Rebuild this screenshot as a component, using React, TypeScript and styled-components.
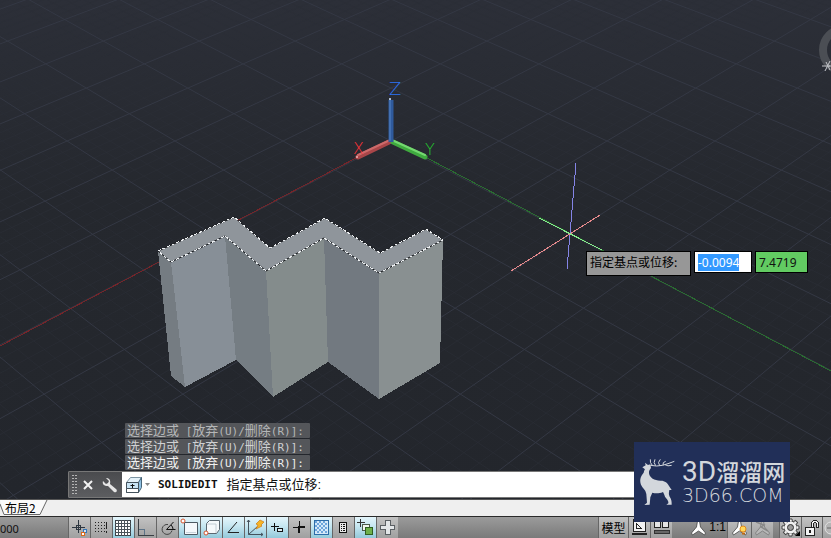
import React, { useEffect, useRef } from 'react';
import styled, { createGlobalStyle } from 'styled-components';

const GlobalStyle = createGlobalStyle`
  * { box-sizing: border-box; }
  body { margin: 0; background: #24272d; font-family: "Noto Sans", "Noto Sans CJK SC", sans-serif; }
  button, input { font: inherit; margin: 0; }
  svg { flex: none; }
`;

const Page = styled.div`
  position: relative;
  display: flex;
  flex-direction: column;
  height: 100vh;
  overflow: hidden;
`;

const Viewport = styled.main`
  position: relative;
  flex: 1;
  min-height: 0;
  overflow: hidden;
  background: linear-gradient(#2c2f38, #25282e 40%, #23262c);
`;

const Scene = styled.svg`
  display: block;
  width: 100%;
  height: 100%;
`;

/* ---------- dynamic input ---------- */

const DynamicInput = styled.div`
  position: absolute;
  left: 586px;
  top: 251px;
  display: flex;
  align-items: flex-start;
  gap: 3px;
  font-size: 12px;
`;

const Prompt = styled.label`
  width: 105px;
  height: 25px;
  padding-left: 3px;
  line-height: 20px;
  border: 1px solid #000;
  background: #979797;
  color: #000;
  white-space: nowrap;
  font-family: "Noto Sans CJK SC", sans-serif;
`;

const Coordinate = styled.input<{ $locked?: boolean }>`
  width: ${(p) => (p.$locked ? 53 : 58)}px;
  height: 22px;
  padding: 0 3px;
  line-height: 20px;
  border: 1px solid #000;
  border-radius: 0;
  outline: none;
  background: ${(p) => (p.$locked ? '#62cb62' : '#fff')};
  color: #111;
  &::selection { background: #3399ff; color: #fff; }
`;

/* ---------- command line ---------- */

const CommandDock = styled.section`
  position: absolute;
  left: 68px;
  right: 100px;
  bottom: 1px;
`;

const History = styled.ol`
  list-style: none;
  margin: 0 0 1px 57px;
  padding: 0;
  display: flex;
  flex-direction: column;
  align-items: flex-start;
  gap: 1px;
`;

const HistoryLine = styled.li<{ $tone: string }>`
  height: 15px;
  padding: 0 2px;
  width: 185px;
  border-radius: 1px;
  background: #54565a;
  color: ${(p) => p.$tone};
  font: 13px/15px "Liberation Sans", "Noto Sans CJK SC", sans-serif;
  white-space: pre;
`;

const Mono = styled.span`
  font-family: "DejaVu Sans Mono", monospace;
  font-size: 11px;
`;

const CommandBar = styled.div`
  display: flex;
  height: 27px;
  border: 1px solid #777;
  border-right: 0;
  border-radius: 2px 0 0 2px;
  background: #fff;
`;

const CommandTools = styled.div`
  display: flex;
  align-items: center;
  width: 53px;
  background: linear-gradient(#4a4b4e, #5c5d60);
`;

const BarButton = styled.button<{ $w: number }>`
  display: flex;
  align-items: center;
  justify-content: center;
  width: ${(p) => p.$w}px;
  height: 100%;
  padding: 0;
  border: 0;
  background: none;
`;

const CommandText = styled.p`
  display: flex;
  align-items: center;
  gap: 9px;
  margin: 0 0 0 4px;
  color: #111;
  font: 13px/24px "Liberation Sans", "Noto Sans CJK SC", sans-serif;
  white-space: nowrap;
`;

const CommandName = styled.strong`
  font: bold 11px/24px "DejaVu Sans Mono", monospace;
`;

/* ---------- layout tabs ---------- */

const TabStrip = styled.nav`
  display: flex;
  height: 17px;
  border-top: 1px solid #555;
  background: #efefef;
`;

const TabButton = styled.button`
  position: relative;
  width: 48px;
  height: 15px;
  padding: 0 0 0 5px;
  border: 0;
  background: none;
  text-align: left;
  color: #000;
  font: 12px/15px "Noto Sans CJK SC", sans-serif;
`;

const TabOutline = styled.svg`
  position: absolute;
  left: 0;
  top: 0;
`;

const TabLabel = styled.span`
  position: relative;
`;

/* ---------- status bar ---------- */

const StatusBar = styled.footer`
  display: flex;
  height: 22px;
  border-top: 1px solid #2a2a2a;
  background: linear-gradient(#9b9b9b, #7a7a7a);
`;

const Readout = styled.output`
  width: 68px;
  overflow: hidden;
  color: #111;
  font-size: 11px;
  line-height: 24px;
`;

const Group = styled.div`
  display: flex;
`;

const Spacer = styled.div`
  flex: 1;
`;

const StatusButton = styled.button<{ $on?: boolean; $w?: number; $plain?: boolean }>`
  display: flex;
  align-items: center;
  justify-content: ${(p) => (p.$plain ? 'flex-end' : 'center')};
  flex: none;
  width: ${(p) => p.$w ?? 22}px;
  height: 21px;
  padding: 0;
  border: 0;
  border-left: 1px solid ${(p) => (p.$plain ? 'transparent' : '#666')};
  overflow: hidden;
  color: #000;
  font: 12px/21px "Noto Sans CJK SC", sans-serif;
  background: ${(p) =>
    p.$on
      ? 'linear-gradient(#e4f5fb, #c5e6f0 45%, #93c9da)'
      : p.$plain
        ? 'none'
        : 'linear-gradient(#c2c2c2, #a0a0a0)'};
`;

const Scale = styled.span`
  padding-right: 1px;
  font: 12px/21px "Liberation Sans", sans-serif;
`;

/* ---------- brand card ---------- */

const Brand = styled.aside`
  position: absolute;
  right: 41px;
  bottom: 16px;
  display: flex;
  align-items: center;
  gap: 7px;
  width: 156px;
  height: 80px;
  padding-left: 5px;
  background: #212f58;
  color: #d3d7dc;
`;

const BrandText = styled.div`
  display: flex;
  flex-direction: column;
  white-space: nowrap;
`;

const BrandTitle = styled.div`
  height: 26px;
  font: 500 23px/26px Roboto, "Noto Sans CJK SC", sans-serif;
`;

const BrandLatin = styled.span`
  font-size: 28px;
  font-weight: 400;
`;

const BrandSite = styled.div`
  font: 200 19px/20px "DejaVu Sans", sans-serif;
`;

/* ---------- scene geometry ---------- */

type Pt = [number, number];

/* Ground plane projection: one unit is a major grid square. */
const project = (x: number, y: number): Pt => {
  const w = 1 - 0.03166 * (x + y);
  return [391 + ((y - x) * 54) / w, -748 + 889 / w];
};

const gridLine = (a: Pt, b: Pt) =>
  `M${a.map((n) => n.toFixed(1)).join(' ')}L${b.map((n) => n.toFixed(1)).join(' ')}`;

const buildGrid = (major: boolean) => {
  const parts: string[] = [];
  for (let n = -75; n <= 75; n++) {
    if ((n % 5 === 0) !== major) continue;
    const v = n / 5;
    const end = Math.min(15, 28 - v);
    parts.push(gridLine(project(v, -15), project(v, end)));
    parts.push(gridLine(project(-15, v), project(end, v)));
  }
  return parts.join('');
};

const MINOR = buildGrid(false);
const MAJOR = buildGrid(true);

const FACES: [string, string][] = [
  ['158,251 171,262 185,387 171,376', '#757c82'],
  ['171,262 225,236 236,360 185,387', '#878f97'],
  ['225,236 266,271 273,397 236,360', '#757d83'],
  ['266,271 324,238 328,362 273,397', '#848c8c'],
  ['324,238 379,273 379,399 328,362', '#727980'],
  ['379,273 443,240 440,363 379,399', '#899091'],
];
const TOP = '158,251 234,217 270,248 325,218 380,253 426,229 443,240 379,273 324,238 266,271 225,236 171,262';

function Drawing() {
  return (
    <Scene viewBox="0 0 831 499" preserveAspectRatio="xMinYMin slice" aria-label="三维模型视口">
      <path d={MINOR} stroke="#2b2f37" strokeOpacity="0.6" fill="none" />
      <path d={MAJOR} stroke="#343844" fill="none" />
      <path d="M356 158L0 346" stroke="#74252a" shapeRendering="crispEdges" />
      <path d="M427 158L831 371" stroke="#2a6c31" shapeRendering="crispEdges" />

      <g strokeWidth="5" strokeLinecap="round">
        <path d="M389 142L358 157" stroke="#a94649" />
        <path d="M388 141L358 155" stroke="#cc6a6a" strokeWidth="2" />
        <path d="M393 142L425 157" stroke="#3faa3f" />
        <path d="M394 141L425 155" stroke="#74d870" strokeWidth="2" />
        <path d="M391 100V142" stroke="#2f5a9c" strokeLinecap="butt" />
        <path d="M390 100V140" stroke="#426fb0" strokeWidth="2" />
      </g>
      <circle cx="390" cy="99" r="1" fill="#d7e5f7" />
      <circle cx="357" cy="157" r="1" fill="#f0b6b6" />
      <g fontFamily="'DejaVu Sans', sans-serif" fontWeight="200">
        <text x="389" y="95" fontSize="18" fill="#2c74f4">Z</text>
        <text x="353" y="154" fontSize="16" fill="#ff3338">X</text>
        <text x="425" y="155" fontSize="16" fill="#24c82f">Y</text>
      </g>

      {FACES.map(([points, fill]) => (
        <polygon key={points} points={points} fill={fill} shapeRendering="crispEdges" />
      ))}
      <polygon points={TOP} fill="#8f959b" stroke="#16181b" />
      <polygon points={TOP} fill="none" stroke="#eef0f2" strokeDasharray="3 2" shapeRendering="crispEdges" />

      <g shapeRendering="crispEdges">
        <path d="M576 163L567 269" stroke="#8484e6" />
        <path d="M511 271L600 215" stroke="#e88a8c" />
        <path d="M539 218L602 250" stroke="#86ec8c" />
      </g>

      <circle cx="844" cy="50" r="21" fill="none" stroke="#4b4e54" strokeWidth="8" />
      <path d="M822 66h8M826 62l4 8M830 61l-5 10M829 66h4" stroke="#c4c6ca" fill="none" />
    </Scene>
  );
}

/* ---------- icons ---------- */

const Icon = ({ children, crisp = true }: { children: React.ReactNode; crisp?: boolean }) => (
  <svg width="21" height="21" viewBox="0 0 21 21" fill="none" stroke="#222"
    shapeRendering={crisp ? 'crispEdges' : 'auto'} aria-hidden="true">
    {children}
  </svg>
);

const steps = [0, 1, 2, 3];

const InferIcon = () => (
  <Icon>
    <path d="M3 10.500h13M9.500 3v13" stroke="#2d3640" />
    <path d="M7.500 8.500h4v4h-4z" stroke="#2d3640" />
    <path d="M14.500 12.500h3v3h-3z" stroke="#3576b8" fill="#cfe2f4" />
    <path d="M12.500 15.500h3v3h-3z" stroke="#d96b1c" fill="#fff" />
  </Icon>
);
const SnapIcon = () => (
  <Icon>
    {steps.map((r) => steps.map((c) => <rect key={`${r}${c}`} x={4 + c * 3} y={5 + r * 3} width="1" height="1" fill="#222" stroke="none" />))}
    <path d="M15.500 5v7M15.500 14v2" />
  </Icon>
);
const GridIcon = () => (
  <Icon>
    <path d="M2.500 3.500h15v15h-15z" fill="#fff" stroke="#3a4248" />
    <path d="M5.500 3v16M8.500 3v16M11.500 3v16M14.500 3v16M2 6.500h16M2 9.500h16M2 12.500h16M2 15.500h16" stroke="#4a535a" />
  </Icon>
);
const OrthoIcon = () => (
  <Icon>
    <path d="M3.500 12.500h6v6" stroke="#5c7387" />
    <path d="M3.500 2v16.500H19" stroke="#3a3f44" />
  </Icon>
);
const PolarIcon = () => (
  <Icon crisp={false}>
    <path d="M11 7.500a5 5 0 1 0 4 6" stroke="#444" />
    <path d="M16.500 5l-7 7.500h9M14 8q2 2 2 4" stroke="#111" />
  </Icon>
);
const OsnapIcon = () => (
  <Icon crisp={false}>
    <path d="M5.500 5.500h13v12h-13z" fill="#f4f8fb" stroke="#4d5a63" />
    <path d="M7 15.500h10" stroke="#c8d4dc" />
    <circle cx="4" cy="4" r="2" fill="#fff" stroke="#d5532c" />
  </Icon>
);
const Osnap3dIcon = () => (
  <Icon crisp={false}>
    <path d="M5.500 6.500l3-3h10v9l-3 4h-10z" fill="#f6f9fb" stroke="#5a6770" />
    <path d="M6 7h9v9" stroke="#c3ced5" />
    <circle cx="5" cy="16" r="2" fill="#fff" stroke="#d5532c" />
  </Icon>
);
const TrackIcon = () => (
  <Icon crisp={false}>
    <path d="M14 5L5 15.500h11" stroke="#222" />
  </Icon>
);
const DucsIcon = () => (
  <Icon crisp={false}>
    <path d="M3.500 3v14.500H18M3.500 17.500l9-8M2 5l1.500-2L5 5M16 16l2 1.500-2 1.500" stroke="#44525c" />
    <path d="M15 3l4 2-3 3 1 1-6 3 2-4-2-1z" fill="#f7b526" stroke="#cc7a14" strokeWidth="0.700" />
  </Icon>
);
const DynIcon = () => (
  <Icon>
    <path d="M4 9.500h8M7.500 6v8" stroke="#111" />
    <path d="M10.500 11.500h5v3h-5z" stroke="#111" fill="#dfeef4" />
  </Icon>
);
const LineweightIcon = () => (
  <Icon>
    <path d="M4 10.500h5M10.500 4v7" stroke="#111" />
    <path d="M9 10h7M10 10v6" stroke="#111" strokeWidth="2" />
  </Icon>
);
const TransparencyIcon = () => (
  <Icon>
    <path d="M3.500 3.500h14v14h-14z" fill="#d5e8f8" stroke="#2d6ca8" />
    {[0, 1, 2, 3, 4, 5].map((r) =>
      [0, 1, 2].map((c) => (
        <rect key={`${r}${c}`} x={4 + c * 4 + (r % 2) * 2} y={4 + r * 2} width="2" height="2" fill="#6ea6dc" stroke="none" />
      )),
    )}
  </Icon>
);
const PropertiesIcon = () => (
  <Icon>
    <path d="M6.500 5.500h7v10h-7z" fill="#e9e9e9" stroke="#111" />
    <path d="M8 7.500h1M10 7.500h2M8 9.500h1M10 9.500h2M8 11.500h1M10 11.500h2M8 13.500h1M10 13.500h2" stroke="#111" />
  </Icon>
);
const CyclingIcon = () => (
  <Icon>
    <path d="M2 5.500h8M5.500 2v8" stroke="#333" />
    <path d="M7.500 7.500h7v6h-7z" fill="#f0f6f0" stroke="#4c5d4c" />
    <path d="M10.500 10.500h7v7h-7z" fill="#6eb04b" stroke="#2f5f22" />
  </Icon>
);
const MonitorIcon = () => (
  <Icon>
    <path d="M8.500 3.500h5v5h4v4h-4v5h-5v-5h-5v-4h5z" fill="#e3e6e8" stroke="#5a5f63" />
  </Icon>
);
const LayoutIcon = () => (
  <Icon>
    <path d="M4.500 2.500h12v12h-12z" fill="#f2f2f2" />
    <path d="M7.500 6.500v5h5z" />
    <path d="M3 17h15" strokeWidth="2" />
  </Icon>
);
const ViewsIcon = () => (
  <Icon>
    <path d="M3.500 2.500h6v8h-6zM11.500 2.500h6v8h-6z" fill="#e4e4e4" />
    <path d="M3 13.500h15v3h-15z" fill="#666" stroke="#333" />
  </Icon>
);
const AnnotationIcon = ({ mark, dim }: { mark?: boolean; dim?: boolean }) => (
  <Icon crisp={false}>
    <path d="M9.500 4h2l1 6 5 6-1 2-6-4-6 4-1-2 5-6z" fill={dim ? '#b9b9b9' : '#fff'} stroke={dim ? '#777' : '#444'} strokeWidth="0.800" />
    {mark && <circle cx="14" cy="12" r="3" fill="#ffd85c" stroke="#e08a1a" />}
    {mark && <path d="M13 16.500h3" stroke="#c06a10" strokeWidth="2" />}
    {dim && <path d="M4 5l8 3-3 2 7 4" stroke="#888" strokeWidth="1.500" />}
  </Icon>
);
const TEETH = [0, 45, 90, 135, 180, 225, 270, 315];
const GearIcon = () => (
  <Icon crisp={false}>
    {TEETH.map((a) => (
      <path key={a} d="M8.500 5L9 2h3l0.500 3z" fill="#f2f2f2" stroke="#444" transform={`rotate(${a} 10.500 10.500)`} />
    ))}
    <circle cx="10.500" cy="10.500" r="6" fill="#f2f2f2" stroke="none" />
    <circle cx="10.500" cy="10.500" r="3" fill="#9a9a9a" stroke="#333" />
    <path d="M20 14v5h-5z" fill="#000" stroke="none" />
  </Icon>
);
const LockIcon = () => (
  <Icon>
    <path d="M3.500 10.500h9v8h-9z" fill="#f4f4f4" />
    <path d="M8 13v3" strokeWidth="2" />
    <path d="M9.500 10V5.500l2-2h3l2 2V10h-2V6.500l-1-1h-1l-1 1V10" fill="#f4f4f4" />
  </Icon>
);
const IsolateIcon = () => (
  <Icon crisp={false}>
    <circle cx="14" cy="11" r="6" fill="#b5b5b5" stroke="#e2e2e2" />
    <path d="M10 11h8" stroke="#666" />
  </Icon>
);

const TOGGLES: { label: string; on?: boolean; icon: React.ReactNode }[] = [
  { label: '推断约束', icon: <InferIcon /> },
  { label: '捕捉模式', icon: <SnapIcon /> },
  { label: '栅格显示', on: true, icon: <GridIcon /> },
  { label: '正交模式', icon: <OrthoIcon /> },
  { label: '极轴追踪', icon: <PolarIcon /> },
  { label: '对象捕捉', on: true, icon: <OsnapIcon /> },
  { label: '三维对象捕捉', on: true, icon: <Osnap3dIcon /> },
  { label: '对象捕捉追踪', on: true, icon: <TrackIcon /> },
  { label: '动态 UCS', on: true, icon: <DucsIcon /> },
  { label: '动态输入', on: true, icon: <DynIcon /> },
  { label: '线宽', icon: <LineweightIcon /> },
  { label: '透明度', on: true, icon: <TransparencyIcon /> },
  { label: '快捷特性', icon: <PropertiesIcon /> },
  { label: '选择循环', on: true, icon: <CyclingIcon /> },
  { label: '注释监视器', icon: <MonitorIcon /> },
];

const HISTORY_TONES = ['#b4b6b8', '#cfd0d2', '#f0f0f0'];
const GRIP = [0, 1, 2, 3, 4, 5, 6];

export default function App() {
  const baseInput = useRef<HTMLInputElement>(null);

  useEffect(() => {
    baseInput.current?.focus();
    baseInput.current?.select();
  }, []);

  return (
    <Page>
      <GlobalStyle />
      <Viewport>
        <Drawing />
        <DynamicInput>
          <Prompt htmlFor="base-x">指定基点或位移:</Prompt>
          <Coordinate id="base-x" ref={baseInput} defaultValue="-0.0094" />
          <Coordinate $locked aria-label="Y" defaultValue="7.4719" />
        </DynamicInput>

        <CommandDock>
          <History>
            {HISTORY_TONES.map((tone) => (
              <HistoryLine key={tone} $tone={tone}>
                选择边或<Mono> [</Mono>放弃<Mono>(U)/</Mono>删除<Mono>(R)]:</Mono>
              </HistoryLine>
            ))}
          </History>
          <CommandBar>
            <CommandTools>
              <svg width="9" height="19" viewBox="0 0 9 19" aria-hidden="true">
                {GRIP.map((r) => (
                  <path key={r} d={`M3 ${r * 3}h2v1h-2zM6 ${r * 3}h2v1h-2z`} fill="#b5b5b5" />
                ))}
              </svg>
              <BarButton $w={20} aria-label="关闭">
                <svg width="10" height="10" viewBox="0 0 10 10">
                  <path d="M1 1l8 8M9 1l-8 8" stroke="#f2f2f2" strokeWidth="2" />
                </svg>
              </BarButton>
              <BarButton $w={24} aria-label="自定义">
                <svg width="16" height="16" viewBox="0 0 16 16">
                  <path d="M4 1l3 3-1 2-2 1-3-3c-1 3 1 5 5 5l6 6c2 1 4-1 2-3l-6-5c1-4-1-6-4-6z" fill="#e6e6e6" />
                </svg>
              </BarButton>
            </CommandTools>
            <BarButton $w={32} aria-label="最近使用的命令">
              <svg width="26" height="18" viewBox="0 0 26 18">
                <path d="M1.500 6.500l4-5h11l-3 5z" fill="#e4f2fa" stroke="#7d95a3" />
                <path d="M13.500 6.500l3-5v10l-3 5z" fill="#8fc0e2" stroke="#476579" />
                <path d="M1.500 6.500h12v10h-12z" fill="#c9e4f5" stroke="#44525c" />
                <path d="M1.500 12.500h12v4h-12z" fill="#fff" stroke="#44525c" />
                <path d="M7.500 8v4M5.500 9.500h4" stroke="#111" />
                <path d="M20 7h5l-2.500 3z" fill="#888" />
              </svg>
            </BarButton>
            <CommandText>
              <CommandName>SOLIDEDIT</CommandName>
              <span>指定基点或位移:</span>
            </CommandText>
          </CommandBar>
        </CommandDock>
      </Viewport>

      <TabStrip>
        <TabButton>
          <TabOutline width="48" height="15" viewBox="0 0 48 15" aria-hidden="true">
            <path d="M0 0L4 14.500H40L47 0z" fill="#fafafa" />
            <path d="M0 4L4 14.500H40L47 0" fill="none" stroke="#666" />
          </TabOutline>
          <TabLabel>布局2</TabLabel>
        </TabButton>
      </TabStrip>

      <StatusBar>
        <Readout>000</Readout>
        <Group>
          {TOGGLES.map((t) => (
            <StatusButton key={t.label} $on={t.on} aria-label={t.label} aria-pressed={!!t.on}>
              {t.icon}
            </StatusButton>
          ))}
        </Group>
        <Spacer />
        <Group>
          <StatusButton $w={30}>模型</StatusButton>
          <StatusButton $w={22} aria-label="布局"><LayoutIcon /></StatusButton>
          <StatusButton $w={22} aria-label="快速查看"><ViewsIcon /></StatusButton>
          <StatusButton $w={55} $plain aria-label="注释比例 1:1">
            <AnnotationIcon />
            <Scale>1:1</Scale>
          </StatusButton>
          <StatusButton $w={24} aria-label="注释可见性"><AnnotationIcon mark /></StatusButton>
          <StatusButton $w={22} aria-label="自动缩放"><AnnotationIcon dim /></StatusButton>
          <StatusButton $w={6} $plain aria-hidden="true" tabIndex={-1} />
          <StatusButton $w={22} aria-label="切换工作空间"><GearIcon /></StatusButton>
          <StatusButton $w={21} aria-label="锁定"><LockIcon /></StatusButton>
          <StatusButton $w={9} aria-label="隔离对象"><IsolateIcon /></StatusButton>
        </Group>
      </StatusBar>

      <Brand>
        <svg width="36" height="48" viewBox="26 54 108 144" aria-hidden="true">
          <path
            d="M36 82L46 76 44 68 53 75 60 73 62 84C58 90 55 92 56 100 58 114 72 122 90 122 102 121 112 128 116 138L124 150 117 150C116 158 114 162 118 170 124 178 124 186 124 194L108 194 114 190C116 182 108 176 104 170 102 164 100 160 98 156 84 162 74 160 66 158L60 172 58 194 42 195 50 188 48 162C46 150 40 148 34 138 26 122 30 110 40 98 42 92 42 90 44 88Z"
            fill="#d3d7dc"
          />
          <path
            d="M60 76Q80 80 96 76T132 64M66 76Q58 68 60 58M76 77Q68 68 74 58M88 77Q80 68 90 58M104 74Q112 80 124 76M98 76Q96 66 106 64"
            fill="none" stroke="#d3d7dc" strokeWidth="3"
          />
        </svg>
        <BrandText>
          <BrandTitle><BrandLatin>3D</BrandLatin>溜溜网</BrandTitle>
          <BrandSite>3D66.COM</BrandSite>
        </BrandText>
      </Brand>
    </Page>
  );
}
